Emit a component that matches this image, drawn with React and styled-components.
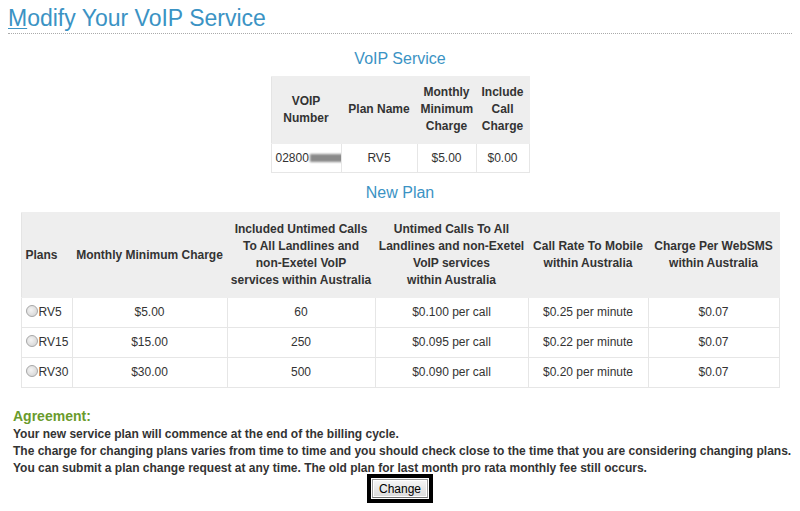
import React from 'react';
import styled, { createGlobalStyle } from 'styled-components';

const GlobalStyle = createGlobalStyle`
  body {
    margin: 8px;
    font-family: "Liberation Sans", Arial, sans-serif;
    color: #333;
    background: #fff;
  }
`;

const blue = '#3b93c4';

const Title = styled.h1`
  margin: 0;
  font-size: 23px;
  font-weight: normal;
  line-height: 20px;
  color: ${blue};
  padding-bottom: 5px;
  border-bottom: 1px dotted #aaa;
  & u { text-decoration-thickness: 1px; text-underline-offset: 2px; }
`;

const SectionTitle = styled.h3`
  margin: ${(p) => p.top || 0}px 0 0;
  font-size: 16px;
  font-weight: normal;
  line-height: 18px;
  color: ${blue};
  text-align: center;
`;

const Table = styled.table`
  border-collapse: collapse;
  table-layout: fixed;
  margin: ${(p) => p.top || 0}px auto 0;
  width: ${(p) => p.width}px;
  font-size: 12px;
  color: #333;
  border: 1px solid #e4e4e4;
`;

const Th = styled.th`
  background: #eeeeee;
  font-weight: bold;
  line-height: 17px;
  padding: ${(p) => p.pad || '8px 3px'};
  text-align: ${(p) => p.align || 'center'};
  border: 1px solid #eeeeee;
  border-left: ${(p) => (p.first ? '1px solid #e4e4e4' : '1px solid #eeeeee')};
`;

const Td = styled.td`
  line-height: 17px;
  height: ${(p) => p.h || 28}px;
  padding: 0 ${(p) => (p.align === 'left' ? 4 : 3)}px;
  text-align: ${(p) => p.align || 'center'};
  border: 1px solid #e6e6e6;
  white-space: nowrap;
  overflow: hidden;
`;

const Redact = styled.span`
  display: inline-block;
  width: 36px;
  height: 8px;
  vertical-align: middle;
  background: #8a8a8a;
  filter: blur(1px);
  margin-left: 1px;
`;

const Radio = styled.span`
  display: inline-block;
  width: 10px;
  height: 10px;
  border-radius: 50%;
  border: 1px solid #a8a8a8;
  background: radial-gradient(circle at 40% 40%, #f4f4f4, #cfcfcf);
  vertical-align: -1px;
  margin: 0 1px 0 0;
`;

const Agreement = styled.div`
  margin-top: 19px;
  padding-left: 5px;
  font-size: 12px;
  font-weight: bold;
  line-height: 17px;
  color: #333;
`;

const AgreementTitle = styled.div`
  color: #6a9b2c;
  font-size: 14px;
  line-height: 18px;
  margin-bottom: 1px;
`;

const ButtonRow = styled.div`
  display: flex;
  justify-content: center;
  margin-top: -3px;
`;

const ButtonFrame = styled.div`
  border: 4px solid #000;
  padding: 1px;
  height: 29px;
  box-sizing: border-box;
`;

const Button = styled.button`
  font-family: "Liberation Sans", Arial, sans-serif;
  font-size: 12px;
  color: #000;
  height: 19px;
  box-sizing: border-box;
  padding: 0 6px;
  border: 1px solid #9a9a9a;
  border-bottom-color: #707070;
  background: linear-gradient(#f6f6f6, #dcdcdc);
  display: block;
  box-shadow: inset 0 0 0 1px #fff;
`;

const plans = [
  ['RV5', '$5.00', '60', '$0.100 per call', '$0.25 per minute', '$0.07'],
  ['RV15', '$15.00', '250', '$0.095 per call', '$0.22 per minute', '$0.07'],
  ['RV30', '$30.00', '500', '$0.090 per call', '$0.20 per minute', '$0.07'],
];

export default function App() {
  return (
    <>
      <GlobalStyle />
      <Title><u>M</u>odify Your VoIP Service</Title>
      <SectionTitle top={16}>VoIP Service</SectionTitle>
      <Table top={8} width={258}>
        <colgroup>
          <col style={{ width: 70 }} />
          <col style={{ width: 76 }} />
          <col style={{ width: 59 }} />
          <col style={{ width: 53 }} />
        </colgroup>
        <thead>
          <tr>
            <Th first pad="7px 3px 8px">VOIP<br />Number</Th>
            <Th pad="7px 3px 8px">Plan Name</Th>
            <Th pad="7px 3px 8px">Monthly<br />Minimum<br />Charge</Th>
            <Th pad="7px 3px 8px">Include<br />Call<br />Charge</Th>
          </tr>
        </thead>
        <tbody>
          <tr>
            <Td align="left">02800<Redact /></Td>
            <Td>RV5</Td>
            <Td>$5.00</Td>
            <Td>$0.00</Td>
          </tr>
        </tbody>
      </Table>
      <SectionTitle top={11}>New Plan</SectionTitle>
      <Table top={10} width={758}>
        <colgroup>
          <col style={{ width: 51 }} />
          <col style={{ width: 155 }} />
          <col style={{ width: 148 }} />
          <col style={{ width: 153 }} />
          <col style={{ width: 120 }} />
          <col style={{ width: 131 }} />
        </colgroup>
        <thead>
          <tr>
            <Th first align="left" pad="8px 4px">Plans</Th>
            <Th>Monthly Minimum Charge</Th>
            <Th>Included Untimed Calls To All Landlines and non-Exetel VoIP services within Australia</Th>
            <Th>Untimed Calls To All Landlines and non-Exetel VoIP services<br />within Australia</Th>
            <Th>Call Rate To Mobile within Australia</Th>
            <Th>Charge Per WebSMS within Australia</Th>
          </tr>
        </thead>
        <tbody>
          {plans.map((p) => (
            <tr key={p[0]}>
              <Td align="left" h={29}><Radio />{p[0]}</Td>
              {p.slice(1).map((v, i) => (
                <Td key={i} h={29}>{v}</Td>
              ))}
            </tr>
          ))}
        </tbody>
      </Table>
      <Agreement>
        <AgreementTitle>Agreement:</AgreementTitle>
        <div>Your new service plan will commence at the end of the billing cycle.</div>
        <div>The charge for changing plans varies from time to time and you should check close to the time that you are considering changing plans.</div>
        <div>You can submit a plan change request at any time. The old plan for last month pro rata monthly fee still occurs.</div>
      </Agreement>
      <ButtonRow>
        <ButtonFrame>
          <Button>Change</Button>
        </ButtonFrame>
      </ButtonRow>
    </>
  );
}
